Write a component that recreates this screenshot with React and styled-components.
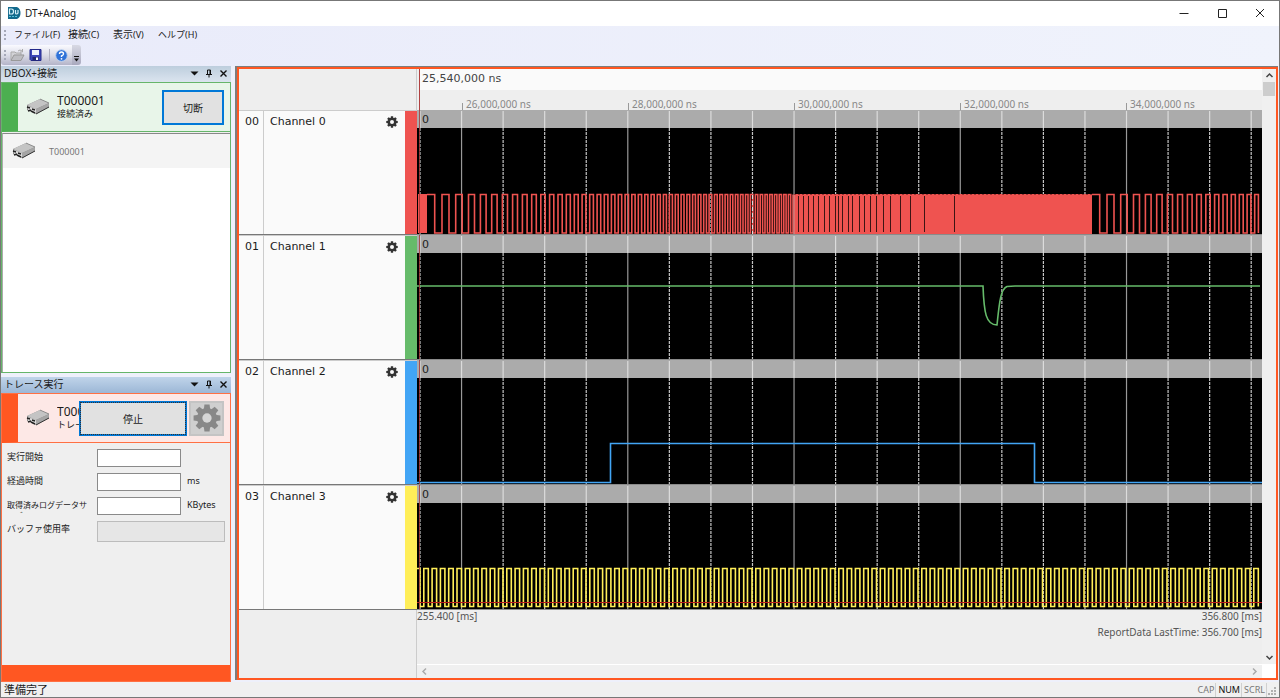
import React from "react";
import styled, { createGlobalStyle } from "styled-components";

const GlobalStyle = createGlobalStyle`
  * {
    box-sizing: border-box;
  }

  body {
    margin: 0;
    font-family: "Noto Sans", "Noto Sans CJK JP", sans-serif;
    font-size: 10px;
    color: #1a1a1a;
  }

  button, input {
    font: inherit;
    color: inherit;
  }
`;

const Window = styled.div`
  display: flex;
  flex-direction: column;
  height: 100vh;
  min-height: 690px;
  border: 1px solid #777;
  background: #eef0fb;
  overflow: hidden;
`;

const TitleBar = styled.header`
  display: flex;
  align-items: center;
  height: 25px;
  padding: 0 0 2px 6px;
  background: #fff;
`;

const Title = styled.h1`
  flex: 1;
  margin: 0 0 0 4px;
  font-size: 10px;
  font-weight: 400;
`;

const WindowButton = styled.button`
  display: flex;
  align-items: center;
  justify-content: center;
  width: 38px;
  height: 23px;
  padding: 0;
  border: 0;
  background: none;
`;

const MenuBar = styled.nav`
  display: flex;
  align-items: center;
  height: 19px;
  padding: 0 0 2px 3px;
  background: linear-gradient(90deg, #e9ebfa, #f0f3fc);
`;

const Grip = styled.span`
  width: 2px;
  height: 10px;
  background: repeating-linear-gradient(#a5a8b8 0 2px, transparent 2px 4px);
`;

const MenuItem = styled.button`
  width: ${(p) => p.$width}px;
  padding: 0;
  border: 0;
  background: none;
  text-align: left;
  white-space: nowrap;
  font-size: ${(p) => p.$size}px;
  line-height: 16px;

  &:first-of-type {
    margin-left: 8px;
  }

  small {
    font-size: 9px;
  }
`;

const ToolRow = styled.div`
  display: flex;
  height: 21px;
  background: linear-gradient(90deg, #e9ebfa, #f0f3fc);
`;

const Toolbar = styled.div`
  display: flex;
  align-items: center;
  gap: 4px;
  width: 71px;
  height: 20px;
  padding-left: 3px;
  border-radius: 2px 0 0 3px;
  background: linear-gradient(#fafaff, #dcdde8 50%, #b4b4c8);
`;

const ToolButton = styled.button`
  display: flex;
  padding: 0;
  border: 0;
  background: none;
`;

const ToolDivider = styled.span`
  width: 1px;
  height: 12px;
  margin: 0 1px 0 3px;
  background: #b0b0c0;
`;

const ToolOverflow = styled.button`
  display: flex;
  align-items: flex-end;
  justify-content: center;
  width: 9px;
  height: 20px;
  padding: 0 0 3px;
  border: 0;
  border-radius: 0 3px 3px 0;
  background: linear-gradient(#d8d9e4, #a9a9be);
`;

const Workspace = styled.main`
  display: flex;
  flex: 1;
  gap: 4px;
  min-height: 0;
`;

const Sidebar = styled.aside`
  display: flex;
  flex-direction: column;
  flex: 0 0 230px;
  gap: 4px;
  min-width: 0;
`;

const Dock = styled.section`
  display: flex;
  flex-direction: column;
  flex: ${(p) => (p.$grow ? "1 1 0" : "0 0 307px")};
  min-width: 0;
  min-height: 0;
`;

const DockHeader = styled.div`
  display: flex;
  align-items: center;
  gap: 6px;
  flex: 0 0 16px;
  padding: 0 3px 2px;
  background: ${(p) =>
    p.$active ? "linear-gradient(#c0d4ea, #9cb7d6)" : "linear-gradient(#bdcedd, #dbe4ef)"};
`;

const DockTitle = styled.h2`
  flex: 1;
  margin: 0;
  font-size: 10px;
  font-weight: 400;
  line-height: 14px;
`;

const DockButton = styled.button`
  display: flex;
  padding: 0;
  border: 0;
  background: none;
`;

const DockBody = styled.div`
  display: flex;
  flex-direction: column;
  flex: 1;
  border: 1px solid ${(p) => p.$color};
  background: #efefef;
`;

const DeviceBanner = styled.div`
  display: flex;
  align-items: center;
  height: 49px;
  padding-right: 6px;
  border-left: 16px solid ${(p) => p.$bar};
  border-bottom: 1px solid ${(p) => p.$line};
  background: ${(p) => p.$background};
`;

const DeviceInfo = styled.div`
  flex: 1;
  min-width: 0;
  margin-left: 7px;
  overflow: hidden;
  white-space: nowrap;
  font-size: 9px;
  line-height: 12px;
`;

const DeviceName = styled.div`
  font-size: 12px;
  line-height: 14px;
`;

const ActionButton = styled.button`
  width: ${(p) => p.$width}px;
  height: 35px;
  padding: 0;
  border: 2px solid #0078d7;
  background: #e1e1e1;
  outline: ${(p) => (p.$focused ? "1px dotted #333" : "none")};
  outline-offset: -2px;
`;

const SettingsButton = styled.button`
  display: flex;
  align-items: center;
  justify-content: center;
  width: 35px;
  height: 35px;
  margin-left: 2px;
  padding: 0;
  border: 2px solid #c4c4c4;
  background: #cfcfcf;
`;

const BannerIcon = styled.span`
  display: flex;
  margin-left: 8px;
`;

const DeviceList = styled.ul`
  flex: 1;
  margin: 1px 0 0;
  padding: 0;
  border-top: 1px solid #888;
  border-left: 1px solid #aaa;
  background: #fff;
  list-style: none;
`;

const DeviceItem = styled.li`
  display: flex;
  align-items: center;
  gap: 13px;
  height: 34px;
  padding-left: 9px;
  background: #f4f4f4;
  color: #777;
  font-size: 9px;
`;

const Fields = styled.form`
  display: grid;
  grid-template-columns: 90px 84px 1fr;
  grid-auto-rows: 18px;
  row-gap: 6px;
  flex: 1;
  align-content: start;
  padding: 6px 5px 0 5px;
  font-size: 9px;
`;

const FieldLabel = styled.label`
  width: 82px;
  height: 16px;
  overflow: hidden;
  line-height: 16px;
`;

// two-line label, the second line is clipped by the row
const LongFieldLabel = styled(FieldLabel)`
  padding-top: 2px;
  font-size: 8px;
  line-height: 11px;
`;

const FieldInput = styled.input`
  width: 84px;
  height: 18px;
  padding: 0 3px;
  border: 1px solid #8a8a8a;
  background: #fff;
`;

const Unit = styled.span`
  padding-left: 6px;
  line-height: 16px;
`;

const UsageBar = styled.div`
  grid-column: 2 / 4;
  height: 21px;
  border: 1px solid #bcbcbc;
  background: #e6e6e6;
`;

const RunningBar = styled.div`
  height: 16px;
  background: #ff5722;
`;

const GraphFrame = styled.section`
  flex: 1;
  min-width: 0;
  margin: 0 1px 2px 0;
  border-top: 1px solid #7d7d7d;
  border-left: 2px solid #7d7d7d;
`;

const Graph = styled.div`
  display: flex;
  height: 100%;
  border: 2px solid #ff5722;
  background: #eee;
`;

const GraphBody = styled.div`
  display: flex;
  flex-direction: column;
  flex: 1;
  min-width: 0;
`;

const SplitRow = styled.div`
  display: grid;
  grid-template-columns: 178px 1fr;
  flex: ${(p) => (p.$grow ? "1" : "none")};
`;

const Corner = styled.div`
  border-right: 1px solid #ccc;
`;

const Ruler = styled.div`
  min-width: 0;
  height: 41px;
  padding-left: 2px;
  overflow: hidden;
`;

const RulerInner = styled.div`
  height: 41px;
  border-left: 1px solid #b04040;
`;

const RulerPosition = styled.div`
  height: 21px;
  padding-left: 2px;
  background: #fafafa;
  color: #444;
  font-family: "DejaVu Sans", sans-serif;
  font-size: 11px;
  line-height: 19px;
`;

const RulerMarks = styled.div`
  display: flex;
  align-items: flex-end;
  height: 20px;
  padding-left: 5%;
`;

const RulerMark = styled.span`
  flex: 0 0 166px;
  height: 7px;
  padding-left: 3px;
  border-left: 1px solid #999;
  color: #888;
  font-size: 10px;
  line-height: 3px;
  white-space: nowrap;
`;

const ChannelRow = styled.div`
  display: grid;
  grid-template-columns: 25px 1fr 12px;
  height: 125px;
  border-top: 1px solid #ccc;
  border-bottom: 1px solid #777;
  background: #fafafa;
  font-family: "DejaVu Sans", sans-serif;
  font-size: 11px;
  line-height: 22px;
`;

const ChannelNumber = styled.span`
  padding-left: 6px;
  border-right: 1px solid #ccc;
`;

const ChannelName = styled.span`
  display: flex;
  justify-content: space-between;
  padding: 0 7px 0 6px;

  svg {
    margin-top: 5px;
  }
`;

const ChannelColor = styled.span`
  background: ${(p) => p.$color};
`;

const Plot = styled.div`
  height: 125px;
  border-bottom: 1px solid #8a8a8a;
  background: linear-gradient(#ababab 18px, #000 18px);

  svg {
    display: block;
    width: 100%;
    height: 124px;
  }
`;

const GraphFooter = styled.div`
  display: flex;
  flex-direction: column;
  justify-content: space-between;
  color: #555;
  font-size: 10px;
  line-height: 12px;
`;

const TimeRange = styled.div`
  display: flex;
  justify-content: space-between;
`;

const LastTime = styled.div`
  margin-top: 4px;
  text-align: right;
`;

const HorizontalScroll = styled.div`
  display: flex;
  align-items: center;
  justify-content: space-between;
  height: 14px;
  padding: 0 3px;
  border-top: 1px solid #fff;
  background: #f0f0f0;
`;

const VerticalScroll = styled.div`
  display: flex;
  flex-direction: column;
  align-items: center;
  width: 14px;
  border-bottom: 14px solid #fff;
  background: #f0f0f0;
`;

const ScrollButton = styled.button`
  display: flex;
  align-items: center;
  justify-content: center;
  width: 13px;
  height: 13px;
  padding: 0;
  border: 0;
  background: none;
`;

const Thumb = styled.div`
  width: 12px;
  height: 14px;
  margin-bottom: auto;
  background: #cdcdcd;
`;

const StatusBar = styled.footer`
  display: flex;
  align-items: center;
  height: 15px;
  padding: 0 2px 0 3px;
  background: #f0f0f0;
  font-size: 11px;
  line-height: 14px;
`;

const StatusText = styled.span`
  flex: 1;
`;

const StatusKey = styled.span`
  padding: 0 1px 0 2px;
  border-right: 1px solid #d0d0d0;
  color: ${(p) => (p.$on ? "#111" : "#777")};
  font-size: 9px;
`;

const Gear = ({ size, color, hole }) => (
  <svg width={size} height={size} viewBox="0 0 24 24" aria-hidden="true">
    {[0, 45, 90, 135].map((angle) => (
      <path
        key={angle}
        d="M9.2 5 L9.8 0.5 H14.2 L14.8 5 V19 L14.2 23.5 H9.8 L9.2 19 Z"
        fill={color}
        transform={`rotate(${angle} 12 12)`}
      />
    ))}
    <circle cx="12" cy="12" r="8.6" fill={color} />
    <circle cx="12" cy="12" r="4" fill={hole} />
  </svg>
);

const DeviceIcon = () => (
  <svg width="24" height="18" viewBox="0 0 24 18" aria-hidden="true">
    <path d="M1 7 L14 1 L23 5 V9 L10 16 L1 12 Z" fill="#8c8c8c" />
    <path d="M1 7 L14 1 L23 5 L10 11 Z" fill="#c4c4c4" />
    <path d="M10 11 L23 5 V9 L10 16 Z" fill="#a5a5a5" />
    <path d="M10 16 L23 9" stroke="#333" />
    <path d="M2 8 L10 11 V15 L2 12 Z" fill="#ddd" />
    <path d="M1 9 L4 10 M2 13 L5 12 M5 13 L9 15 M6 11 L9 12" stroke="#222" strokeWidth="1.4" />
    <path d="M14 1 L23 5" stroke="#777" strokeWidth="0.7" />
  </svg>
);

const Chevron = ({ angle = 0, color = "#444", width = 1.5 }) => (
  <svg width="9" height="9" viewBox="0 0 9 9" aria-hidden="true">
    <path
      d="M1.5 6 L4.5 3 L7.5 6"
      fill="none"
      stroke={color}
      strokeWidth={width}
      transform={`rotate(${angle} 4.5 4.5)`}
    />
  </svg>
);

const DockControls = () => (
  <>
    <DockButton aria-label="Menu">
      <svg width="9" height="9" viewBox="0 0 9 9">
        <path d="M0.5 2.5 H8.5 L4.5 6.5 Z" fill="#111" />
      </svg>
    </DockButton>
    <DockButton aria-label="Pin">
      <svg width="8" height="9" viewBox="0 0 8 9">
        <path d="M2.5 1 H5.5 V5.5 M2.5 1 V5.5 M1 5.5 H7 M4 5.5 V8.5" fill="none" stroke="#111" />
        <path d="M4.5 1 H6 V5 H4.5 Z" fill="#111" />
      </svg>
    </DockButton>
    <DockButton aria-label="Close">
      <svg width="9" height="9" viewBox="0 0 9 9">
        <path d="M1.5 1.5 L7.5 7.5 M7.5 1.5 L1.5 7.5" stroke="#111" strokeWidth="1.4" />
      </svg>
    </DockButton>
  </>
);

// plot coordinates: 845 x 124 units per channel
const PLOT_WIDTH = 845;
const GRID_START = 3;
const GRID_STEP = 41.56;
const SWEEP_LENGTH = 665;

const gridLines = Array.from({ length: 21 }, (_, i) => ({
  x: GRID_START + i * GRID_STEP,
  major: i % 4 === 1,
}));

// square wave whose frequency rises linearly from startX
const sweepPath = (startX, endX) => {
  const f0 = 0.0634;
  const k = 0.00043;
  let d = `M${startX} 84.5`;
  for (let half = 1; ; half++) {
    const x = startX + (Math.sqrt(f0 * f0 + k * half) - f0) / k;
    if (x > endX) break;
    d += ` H${x.toFixed(1)} V${half % 2 ? 123 : 84.5}`;
  }
  return d;
};

const clockPath = () => {
  let d = "M0 83.5 H3 V121.5";
  for (let x = 6.8; x < PLOT_WIDTH - 5; x += 8.3) {
    d += ` H${x.toFixed(1)} V83.5 H${(x + 4.5).toFixed(1)} V121.5`;
  }
  return d;
};

const GAPS = [
  381, 386, 391, 396, 401, 407, 412, 418, 421, 425, 431, 435, 442, 447, 453, 459, 466, 473, 483,
  493, 507, 537,
];

const SweepWave = () => (
  <g stroke="#ef5350" strokeWidth="1.6" fill="none">
    <rect x="1" y="84" width="9" height="39" fill="#ef5350" stroke="none" />
    <path d={sweepPath(10, 377)} />
    <rect x="377" y="84" width="298" height="40" fill="#ef5350" stroke="none" />
    <path d="M377 84.5 H675" stroke="#9c3533" strokeWidth="1" strokeDasharray="2 2" />
    {GAPS.map((x) => (
      <path key={x} d={`M${x + 0.5} 86 V122`} stroke="#3d1514" strokeWidth="1" />
    ))}
    <path d={sweepPath(10 + SWEEP_LENGTH, 843)} />
    <g stroke="#ddd" strokeWidth="1">
      <path d="M335.5 85 V124" strokeDasharray="4 2" />
      <path d="M377 85 V124" stroke="#bbb" opacity="0.6" />
    </g>
  </g>
);

const DipWave = () => (
  <path
    d="M0 51 H566 C567 78 569 90 580 90 C582 72 583 54 590 51.5 L598 51 H843"
    stroke="#66bb6a"
    strokeWidth="1.6"
    fill="none"
  />
);

const PulseWave = () => (
  <path d="M0 122.5 H193.5 V83.5 H617.5 V122.5 H845" stroke="#42a5f5" strokeWidth="1.6" fill="none" />
);

const ClockWave = () => (
  <>
    <path d={clockPath()} stroke="#ffee58" strokeWidth="1.6" fill="none" />
    <path d="M0 117.5 H845" stroke="#b71c1c" />
  </>
);

const CHANNELS = [
  { id: "00", name: "Channel 0", color: "#ef5350", Wave: SweepWave },
  { id: "01", name: "Channel 1", color: "#66bb6a", Wave: DipWave },
  { id: "02", name: "Channel 2", color: "#42a5f5", Wave: PulseWave },
  { id: "03", name: "Channel 3", color: "#ffee58", Wave: ClockWave },
];

const MARKS = ["26,000,000 ns", "28,000,000 ns", "30,000,000 ns", "32,000,000 ns", "34,000,000 ns"];

const MENUS = [
  { label: "ファイル", hotkey: "F", width: 54, size: 9 },
  { label: "接続", hotkey: "C", width: 45, size: 10 },
  { label: "表示", hotkey: "V", width: 45, size: 10 },
  { label: "ヘルプ", hotkey: "H", width: 45, size: 9 },
];

const Channel = ({ id, name, color, Wave }) => (
  <SplitRow>
    <ChannelRow>
      <ChannelNumber>{id}</ChannelNumber>
      <ChannelName>
        {name}
        <Gear size={12} color="#333" hole="#fafafa" />
      </ChannelName>
      <ChannelColor $color={color} />
    </ChannelRow>
    <Plot>
      <svg viewBox={`0 0 ${PLOT_WIDTH} 124`} preserveAspectRatio="none">
        {gridLines.map(({ x, major }) => (
          <g key={x} strokeWidth="1.2">
            <path
              d={`M${x} 18 V124`}
              stroke={major ? "#999" : "#c4c4c4"}
              strokeDasharray={major ? "none" : "3 1"}
            />
            <path d={`M${x} 1 V18`} stroke="#dcdcdc" />
          </g>
        ))}
        <Wave />
        <path d="M2.5 0 V124" stroke="#a03030" opacity="0.8" />
        <text x="5" y="13" fontFamily="DejaVu Sans, sans-serif" fontSize="11" fill="#222">
          0
        </text>
      </svg>
    </Plot>
  </SplitRow>
);

const App = () => (
  <Window>
    <GlobalStyle />
    <TitleBar>
      <svg width="14" height="14" viewBox="0 0 14 14" aria-hidden="true">
        <path d="M1 1 H10 Q13.5 2.5 13.5 7 T10 13 H1 Z" fill="#12698c" />
        <path d="M2.5 3 H4.5 Q6.5 3 6.5 5.5 T4.5 8 H2.5 Z M8.5 4 V7 Q8.5 8 9.5 8 T11 7 V4" fill="none" stroke="#d8f2fa" strokeWidth="1.2" />
        <path d="M2 10.5 H11" stroke="#55c4dd" strokeDasharray="2 1" />
      </svg>
      <Title>DT+Analog</Title>
      <WindowButton aria-label="Minimize">
        <svg width="10" height="10" viewBox="0 0 10 10"><path d="M0.5 5.5 H9.5" stroke="#222" /></svg>
      </WindowButton>
      <WindowButton aria-label="Maximize">
        <svg width="10" height="10" viewBox="0 0 10 10"><path d="M1.5 1.5 H9.5 V9.5 H1.5 Z" fill="none" stroke="#222" /></svg>
      </WindowButton>
      <WindowButton aria-label="Close">
        <svg width="10" height="10" viewBox="0 0 10 10"><path d="M1 1 L9 9 M9 1 L1 9" stroke="#222" /></svg>
      </WindowButton>
    </TitleBar>
    <MenuBar>
      <Grip />
      {MENUS.map((m) => (
        <MenuItem key={m.hotkey} $width={m.width} $size={m.size}>
          {m.label}
          <small>({m.hotkey})</small>
        </MenuItem>
      ))}
    </MenuBar>
    <ToolRow>
      <Toolbar>
        <Grip />
        <ToolButton aria-label="Open">
          <svg width="15" height="14" viewBox="0 0 15 14">
            <path d="M1 12 V4 H5 L6 5 H11 V7" fill="#d2d2d6" stroke="#aaa" />
            <path d="M1 12.5 L4 7 H14 L11 12.5 Z" fill="#bdbdc2" stroke="#999" />
            <path d="M8 3 Q10 1 12 3 M12.5 1 V4 H10" fill="none" stroke="#aaa" />
          </svg>
        </ToolButton>
        <ToolButton aria-label="Save">
          <svg width="13" height="12" viewBox="0 0 12 12">
            <path d="M0.5 0.5 H11.5 V11.5 H1.5 L0.5 10.5 Z" fill="#3c46b8" stroke="#23298a" />
            <path d="M2.5 1 H9.5 V6 H2.5 Z" fill="#eef1fb" />
            <path d="M3 8 H9 V11.5 H3 Z" fill="#20266f" />
            <path d="M6.5 8.5 H8.5 V11 H6.5 Z" fill="#fff" />
          </svg>
        </ToolButton>
        <ToolDivider />
        <ToolButton aria-label="Help">
          <svg width="13" height="13" viewBox="0 0 13 13">
            <circle cx="6.5" cy="6.5" r="5.8" fill="#2f72d8" stroke="#bcd0ee" />
            <path d="M4.5 5 Q4.5 3 6.5 3 T8.5 5 Q8.5 6 6.5 7 V8" fill="none" stroke="#fff" strokeWidth="1.4" />
            <circle cx="6.5" cy="9.8" r="0.9" fill="#fff" />
          </svg>
        </ToolButton>
      </Toolbar>
      <ToolOverflow aria-label="Toolbar options">
        <svg width="5" height="6" viewBox="0 0 5 6">
          <path d="M0 0.5 H5" stroke="#111" />
          <path d="M0 2.5 H5 L2.5 5.5 Z" fill="#111" />
        </svg>
      </ToolOverflow>
    </ToolRow>

    <Workspace>
      <Sidebar>
        <Dock>
          <DockHeader>
            <DockTitle>DBOX+接続</DockTitle>
            <DockControls />
          </DockHeader>
          <DockBody $color="#66b56a">
            <DeviceBanner $bar="#4caf50" $line="#66b56a" $background="#e8f5e9">
              <BannerIcon><DeviceIcon /></BannerIcon>
              <DeviceInfo>
                <DeviceName>T000001</DeviceName>
                接続済み
              </DeviceInfo>
              <ActionButton $width={62}>切断</ActionButton>
            </DeviceBanner>
            <DeviceList>
              <DeviceItem>
                <DeviceIcon />
                T000001
              </DeviceItem>
            </DeviceList>
          </DockBody>
        </Dock>

        <Dock $grow>
          <DockHeader $active>
            <DockTitle>トレース実行</DockTitle>
            <DockControls />
          </DockHeader>
          <DockBody $color="#ff7043">
            <DeviceBanner $bar="#ff5722" $line="#ff7043" $background="#fde8e6">
              <BannerIcon><DeviceIcon /></BannerIcon>
              <DeviceInfo>
                <DeviceName>T000001</DeviceName>
                トレース中
              </DeviceInfo>
              <ActionButton $width={108} $focused>停止</ActionButton>
              <SettingsButton aria-label="Settings">
                <Gear size={28} color="#888" hole="#d6d6d6" />
              </SettingsButton>
            </DeviceBanner>
            <Fields>
              <FieldLabel htmlFor="start">実行開始</FieldLabel>
              <FieldInput id="start" />
              <Unit />
              <FieldLabel htmlFor="elapsed">経過時間</FieldLabel>
              <FieldInput id="elapsed" />
              <Unit>ms</Unit>
              <LongFieldLabel htmlFor="size">取得済みログデータサイズ</LongFieldLabel>
              <FieldInput id="size" />
              <Unit>KBytes</Unit>
              <FieldLabel as="span" id="usage">バッファ使用率</FieldLabel>
              <UsageBar role="progressbar" aria-labelledby="usage" aria-valuenow={0} />
            </Fields>
            <RunningBar />
          </DockBody>
        </Dock>
      </Sidebar>

      <GraphFrame>
        <Graph>
          <GraphBody>
            <SplitRow>
              <Corner />
              <Ruler>
                <RulerInner>
                  <RulerPosition>25,540,000 ns</RulerPosition>
                  <RulerMarks>
                    {MARKS.map((mark) => (
                      <RulerMark key={mark}>{mark}</RulerMark>
                    ))}
                  </RulerMarks>
                </RulerInner>
              </Ruler>
            </SplitRow>
            {CHANNELS.map((channel) => (
              <Channel key={channel.id} {...channel} />
            ))}
            <SplitRow $grow>
              <Corner />
              <GraphFooter>
                <div>
                  <TimeRange>
                    <span>255.400 [ms]</span>
                    <span>356.800 [ms]</span>
                  </TimeRange>
                  <LastTime>ReportData LastTime: 356.700 [ms]</LastTime>
                </div>
                <HorizontalScroll>
                  <Chevron angle={-90} color="#aaa" />
                  <Chevron angle={90} color="#aaa" />
                </HorizontalScroll>
              </GraphFooter>
            </SplitRow>
          </GraphBody>
          <VerticalScroll>
            <ScrollButton aria-label="Scroll up"><Chevron /></ScrollButton>
            <Thumb />
            <ScrollButton aria-label="Scroll down"><Chevron angle={180} /></ScrollButton>
          </VerticalScroll>
        </Graph>
      </GraphFrame>
    </Workspace>

    <StatusBar>
      <StatusText>準備完了</StatusText>
      <StatusKey>CAP</StatusKey>
      <StatusKey $on>NUM</StatusKey>
      <StatusKey>SCRL</StatusKey>
      <svg width="10" height="12" viewBox="0 0 10 12" aria-hidden="true">
        <path d="M7 4 h2 M4 7 h2 M7 7 h2 M1 10 h2 M4 10 h2 M7 10 h2" stroke="#b0b0b0" strokeWidth="2" />
      </svg>
    </StatusBar>
  </Window>
);

export default App;
